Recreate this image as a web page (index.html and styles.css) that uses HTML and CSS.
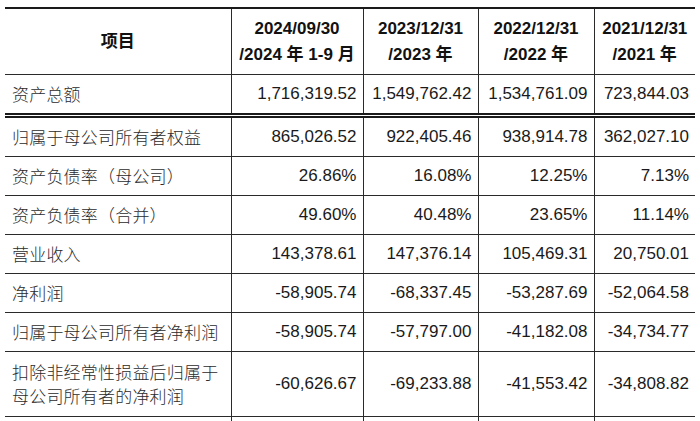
FILE: index.html
```html
<!DOCTYPE html>
<html lang="zh">
<head>
<meta charset="utf-8">
<link rel="stylesheet" href="styles.css">
</head>
<body>
<table class="fin">
  <colgroup>
    <col class="c-item">
    <col class="c-a">
    <col class="c-b">
    <col class="c-c">
    <col class="c-d">
  </colgroup>
  <thead>
    <tr class="head">
      <th>项目</th>
      <th>2024/09/30<br>/2024 年 1-9 月</th>
      <th>2023/12/31<br>/2023 年</th>
      <th>2022/12/31<br>/2022 年</th>
      <th>2021/12/31<br>/2021 年</th>
    </tr>
  </thead>
  <tbody>
    <tr class="row total">
      <td class="label">资产总额</td>
      <td class="num">1,716,319.52</td>
      <td class="num">1,549,762.42</td>
      <td class="num">1,534,761.09</td>
      <td class="num">723,844.03</td>
    </tr>
    <tr class="row">
      <td class="label">归属于母公司所有者权益</td>
      <td class="num">865,026.52</td>
      <td class="num">922,405.46</td>
      <td class="num">938,914.78</td>
      <td class="num">362,027.10</td>
    </tr>
    <tr class="row">
      <td class="label">资产负债率（母公司）</td>
      <td class="num">26.86%</td>
      <td class="num">16.08%</td>
      <td class="num">12.25%</td>
      <td class="num">7.13%</td>
    </tr>
    <tr class="row">
      <td class="label">资产负债率（合并）</td>
      <td class="num">49.60%</td>
      <td class="num">40.48%</td>
      <td class="num">23.65%</td>
      <td class="num">11.14%</td>
    </tr>
    <tr class="row">
      <td class="label">营业收入</td>
      <td class="num">143,378.61</td>
      <td class="num">147,376.14</td>
      <td class="num">105,469.31</td>
      <td class="num">20,750.01</td>
    </tr>
    <tr class="row">
      <td class="label">净利润</td>
      <td class="num">-58,905.74</td>
      <td class="num">-68,337.45</td>
      <td class="num">-53,287.69</td>
      <td class="num">-52,064.58</td>
    </tr>
    <tr class="row">
      <td class="label">归属于母公司所有者净利润</td>
      <td class="num">-58,905.74</td>
      <td class="num">-57,797.00</td>
      <td class="num">-41,182.08</td>
      <td class="num">-34,734.77</td>
    </tr>
    <tr class="row tall">
      <td class="label">扣除非经常性损益后归属于<br>母公司所有者的净利润</td>
      <td class="num">-60,626.67</td>
      <td class="num">-69,233.88</td>
      <td class="num">-41,553.42</td>
      <td class="num">-34,808.82</td>
    </tr>
    <tr class="row">
      <td class="label">&nbsp;</td>
      <td class="num"></td>
      <td class="num"></td>
      <td class="num"></td>
      <td class="num"></td>
    </tr>
  </tbody>
</table>
</body>
</html>
```
FILE: styles.css
```css
html, body {
  margin: 0;
  padding: 0;
  background: #ffffff;
  overflow: hidden;
}

body {
  width: 700px;
  height: 421px;
  color: #1e1e1e;
  font-family: "Liberation Sans", Arial, "Noto Sans CJK SC", sans-serif;
}

.fin {
  margin: 7px 0 0 5px;
  width: 690px;
  border-collapse: collapse;
  table-layout: fixed;
  border-top: 2px solid #1a1a1a;
}

.c-item { width: 226px; }
.c-a { width: 132px; }
.c-b { width: 115px; }
.c-c { width: 116px; }
.c-d { width: 101px; }

.fin th,
.fin td {
  border-bottom: 1px solid #2a2a2a;
  border-left: 1.5px solid #2a2a2a;
  padding: 0 6px;
  font-size: 17px;
}

.fin th:first-child,
.fin td:first-child {
  border-left: none;
}

.head th {
  height: 64px;
  font-weight: bold;
  text-align: center;
  line-height: 26px;
  padding-top: 1px;
  color: #111;
}

.row td {
  height: 38px;
}

.row.total td {
  border-bottom: 5px double #1a1a1a;
}

.row.tall td {
  height: 64px;
}

.label {
  text-align: left;
  font-family: "Noto Sans CJK SC", sans-serif;
  font-weight: 300;
  color: #2b2b2b;
  letter-spacing: 0.2px;
  line-height: 24px;
}

.fin td.label {
  padding-left: 7px;
}

.num {
  text-align: right;
  color: #1a1a1a;
}
```
